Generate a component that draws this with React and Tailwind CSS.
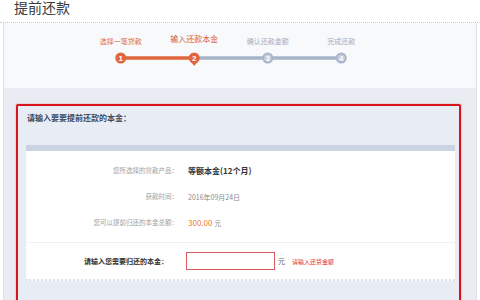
export default function App() {
  const steps = [
    { label: "选择一笔贷款", done: true },
    { label: "输入还款本金", active: true },
    { label: "确认还款金额" },
    { label: "完成还款" },
  ];

  return (
    <div className="w-[480px] h-[300px] overflow-hidden bg-white font-['Noto_Sans_CJK_SC',sans-serif]">
      {/* Page title */}
      <div className="h-[23px] border-b border-dotted border-[#c5cbd5] pl-[14px]">
        <h1 className="text-[14px] leading-[15px] text-[#3a3a3a]">提前还款</h1>
      </div>

      <div className="mx-[3px] h-[277px] border-x border-[#dde2ea] flex flex-col">
        {/* Step indicator */}
        <div className="shrink-0 h-[65px] bg-[#f8f9fb] pt-[12px] pl-[80px]">
          <div className="flex h-[17px]">
            {steps.map((s) => (
              <div key={s.label} className="w-[73.5px] flex justify-center">
                {s.active ? (
                  <span className="text-[8px] leading-[8px] text-[#d9582e]">{s.label}</span>
                ) : (
                  <span
                    className={
                      "mt-[3px] text-[7px] leading-[7px] " +
                      (s.done ? "text-[#d96a48]" : "text-[#a3acc0]")
                    }
                  >
                    {s.label}
                  </span>
                )}
              </div>
            ))}
          </div>
          <svg width="294" height="18" viewBox="0 0 294 18">
            <line x1="36.75" y1="6" x2="110.25" y2="6" stroke="#e0663d" strokeWidth="3.5" />
            <line x1="110.25" y1="6" x2="257.25" y2="6" stroke="#a9b3c9" strokeWidth="3.5" />
            <path d="M106.5 9 L114 9 L110.25 14 Z" fill="#e0663d" />
            <circle cx="36.75" cy="6" r="5.5" fill="#e0663d" />
            <circle cx="110.25" cy="6" r="5.5" fill="#e0663d" />
            <circle cx="183.75" cy="6" r="5.5" fill="#a9b3c9" />
            <circle cx="183.75" cy="6" r="3.8" fill="#c3cadb" />
            <circle cx="257.25" cy="6" r="5.5" fill="#a9b3c9" />
            <circle cx="257.25" cy="6" r="3.8" fill="#c3cadb" />
            {["1", "2", "3", "4"].map((n, i) => (
              <text
                key={n}
                x={36.75 + i * 73.5}
                y="8.8"
                textAnchor="middle"
                fontSize="8"
                fontWeight="700"
                fill="#ffffff"
                fontFamily="Liberation Sans, sans-serif"
              >
                {n}
              </text>
            ))}
          </svg>
        </div>

        {/* Form area */}
        <div className="flex-1 min-h-0 overflow-hidden bg-[#e9edf3] pt-[16px] pl-[12px]">
          <div className="w-[445px] h-[215px] border-2 border-[#d7141a] rounded-[2px] bg-[#e8edf5] shadow-[0_0_2px_rgba(215,20,26,0.4)]">
            <div className="h-[39px] pl-[9px] pt-[8px] text-[8px] leading-[8px] font-bold text-[#3e4a5c]">
              请输入要要提前还款的本金：
            </div>
            <div className="ml-[8px] w-[429px]">
              <div className="h-[6px] bg-[#c9d3e3]" />
              <div className="bg-white pt-[7px] border-b-2 border-dotted border-[#dbe1ea]">
                <div className="h-[26px] flex items-center">
                  <div className="w-[152px] text-right text-[6.5px] text-[#a0a0a0]">您所选择的贷款产品：</div>
                  <div className="ml-[10px] text-[8px] font-bold text-[#333]">等额本金(12个月)</div>
                </div>
                <div className="h-[26px] flex items-center">
                  <div className="w-[152px] text-right text-[6.5px] text-[#a0a0a0]">获款时间：</div>
                  <div className="ml-[10px] text-[7px] text-[#8a8a8a]">2016年09月24日</div>
                </div>
                <div className="h-[26px] flex items-center">
                  <div className="w-[152px] text-right text-[6.5px] text-[#a0a0a0]">您可以提前归还的本金总额：</div>
                  <div className="ml-[10px] flex items-baseline gap-[2px]">
                    <span className="text-[8px] text-[#f07a1a]">300.00</span>
                    <span className="text-[6.5px] text-[#8a8a8a]">元</span>
                  </div>
                </div>
                <div className="mt-[6px] border-t border-[#eef1f5] h-[37px] flex items-center">
                  <div className="w-[142px] text-right text-[7px] font-bold text-[#333]">请输入您需要归还的本金：</div>
                  <input
                    className="ml-[18px] w-[89px] h-[18px] border border-[#d85a60] bg-white outline-none"
                    type="text"
                  />
                  <span className="ml-[3px] text-[7px] text-[#666]">元</span>
                  <span className="ml-[7px] text-[6px] text-[#e0262c]">请输入还贷金额</span>
                </div>
              </div>
            </div>
          </div>
        </div>
      </div>
    </div>
  );
}
